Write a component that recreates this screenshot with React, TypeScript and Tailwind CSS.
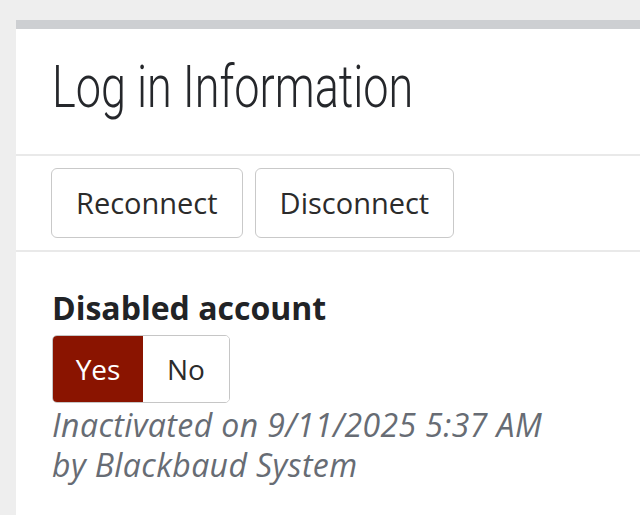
export default function App() {
  return (
    <div className="min-h-[515px] bg-[#eeeeee] pl-[16px] pt-[20px] font-['Open_Sans',sans-serif]">
      <div className="border-t-[9px] border-[#cdcfd2] bg-white">
        <div className="h-[127px] border-b-2 border-[#e9e9e9] pl-[36px] pt-[28px]">
          <h1 className="inline-block origin-left scale-x-[0.75] whitespace-nowrap font-['Roboto',sans-serif] text-[60px] leading-[60px] font-light text-[#25272b]">
            Log in Information
          </h1>
        </div>
        <div className="flex h-[96px] items-start gap-[12px] border-b-2 border-[#e9e9e9] pl-[35px] pt-[12px]">
          <button
            type="button"
            className="h-[70px] rounded-[6px] border border-[#c9c9c9] bg-white px-[24px] text-[29px] text-[#2b2b2b]"
          >
            Reconnect
          </button>
          <button
            type="button"
            className="h-[70px] rounded-[6px] border border-[#c9c9c9] bg-white px-[24px] text-[29px] text-[#2b2b2b]"
          >
            Disconnect
          </button>
        </div>
        <div className="pl-[36px] pt-[38px] pb-[40px]">
          <p className="text-[32px] leading-[36px] font-bold text-[#212326]">Disabled account</p>
          <div className="mt-[9px] flex h-[68px] w-fit overflow-hidden rounded-[5px] border border-[#c6c6c6]">
            <span className="flex w-[90px] items-center justify-center bg-[#8a1400] text-[28px] text-white">
              Yes
            </span>
            <span className="flex w-[86px] items-center justify-center bg-white text-[28px] text-[#2b2b2b]">
              No
            </span>
          </div>
          <p className="mt-[2px] text-[32px] leading-[40px] italic tracking-[0.4px] text-[#676c74]">
            Inactivated on 9/11/2025 5:37 AM
            <br />
            by Blackbaud System
          </p>
        </div>
      </div>
    </div>
  );
}
